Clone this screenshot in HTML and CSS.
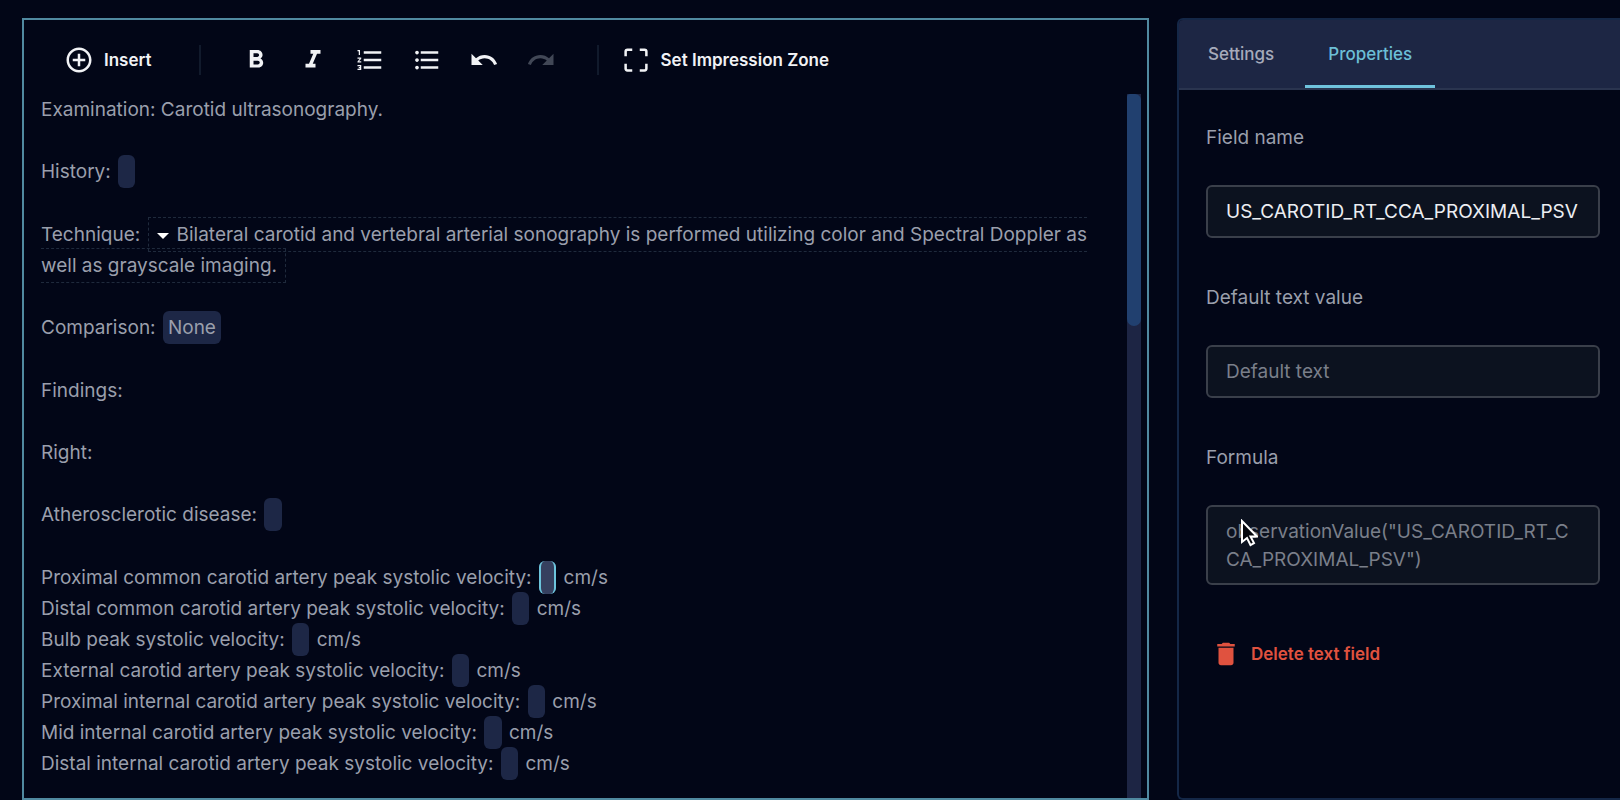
FILE: index.html
```html
<!DOCTYPE html>
<html lang="en">
<head>
<meta charset="utf-8">
<title>Template editor</title>
<link rel="stylesheet" href="styles.css">
</head>
<body>
<main class="workspace">
  <section class="editor">
    <div class="toolbar">
      <button class="tool tool-labelled" type="button">
        <svg class="icon" viewBox="0 0 24 24"><path d="M13 7h-2v4H7v2h4v4h2v-4h4v-2h-4V7zm-1-5C6.480 2 2 6.480 2 12s4.480 10 10 10 10-4.480 10-10S17.520 2 12 2zm0 18c-4.410 0-8-3.590-8-8s3.590-8 8-8 8 3.590 8 8-3.590 8-8 8z"/></svg>
        Insert
      </button>
      <span class="divider"></span>
      <div class="tool-group">
        <button class="tool" type="button" aria-label="Bold"><svg class="icon" viewBox="0 0 24 24"><path d="M15.600 10.790c.970-.670 1.650-1.770 1.650-2.790 0-2.260-1.750-4-4-4H7v14h7.040c2.090 0 3.710-1.700 3.710-3.790 0-1.520-.860-2.820-2.150-3.420zM10 6.500h3c.830 0 1.500.670 1.500 1.500s-.670 1.500-1.500 1.500h-3v-3zm3.500 9H10v-3h3.500c.830 0 1.500.670 1.500 1.500s-.670 1.500-1.500 1.500z"/></svg></button>
        <button class="tool" type="button" aria-label="Italic"><svg class="icon" viewBox="0 0 24 24"><path d="M10 4v3h2.210l-3.420 8H6v3h8v-3h-2.210l3.420-8H18V4z"/></svg></button>
        <button class="tool" type="button" aria-label="Numbered list"><svg class="icon" viewBox="0 0 24 24"><path d="M2 17h2v.5H3v1h1v.5H2v1h3v-4H2v1zm1-9h1V4H2v1h1v3zm-1 3h1.800L2 13.100v.9h3v-1H3.200L5 10.900V10H2v1zm5-6v2h14V5H7zm0 14h14v-2H7v2zm0-6h14v-2H7v2z"/></svg></button>
        <button class="tool" type="button" aria-label="Bulleted list"><svg class="icon" viewBox="0 0 24 24"><path d="M4 10.500c-.830 0-1.500.670-1.500 1.500s.670 1.500 1.500 1.500 1.500-.670 1.500-1.500-.670-1.500-1.500-1.500zm0-6c-.830 0-1.500.670-1.500 1.500S3.170 7.500 4 7.500 5.500 6.830 5.500 6 4.830 4.500 4 4.500zm0 12c-.830 0-1.500.680-1.500 1.500s.680 1.500 1.500 1.500 1.500-.680 1.500-1.500-.670-1.500-1.500-1.500zM7 19h14v-2H7v2zm0-6h14v-2H7v2zm0-8v2h14V5H7z"/></svg></button>
        <button class="tool" type="button" aria-label="Undo"><svg class="icon" viewBox="0 0 24 24"><path d="M12.500 8c-2.650 0-5.050.990-6.900 2.600L2 7v9h9l-3.620-3.620c1.390-1.160 3.160-1.880 5.120-1.880 3.540 0 6.550 2.310 7.600 5.500l2.370-.780C21.080 11.030 17.150 8 12.500 8z"/></svg></button>
        <button class="tool" type="button" aria-label="Redo" disabled><svg class="icon" viewBox="0 0 24 24"><path d="M18.400 10.600C16.550 8.990 14.150 8 11.500 8c-4.650 0-8.580 3.030-9.960 7.220L3.900 16c1.050-3.190 4.050-5.500 7.600-5.500 1.950 0 3.730.720 5.120 1.880L13 16h9V7l-3.600 3.600z"/></svg></button>
      </div>
      <span class="divider"></span>
      <button class="tool tool-labelled" type="button">
        <svg class="icon" viewBox="0 0 24 24"><path class="stroke" d="M3.700 9V5.200a1.500 1.500 0 0 1 1.500-1.500H9M15 3.700h3.800a1.500 1.500 0 0 1 1.500 1.500V9M20.300 15v3.800a1.500 1.500 0 0 1-1.500 1.500H15M9 20.300H5.200a1.500 1.500 0 0 1-1.500-1.500V15"/></svg>
        Set Impression Zone
      </button>
    </div>
    <div class="document">
      <div class="document-text">
        <p>Examination: Carotid ultrasonography.</p>
        <p>History: <span class="field empty">&nbsp;</span></p>
        <p>Technique: <span class="choice"><svg class="caret" viewBox="0 0 12 6"><path d="M0 0h12L6 6z"/></svg>Bilateral carotid and vertebral arterial sonography is performed utilizing color and Spectral Doppler as well as grayscale imaging.</span></p>
        <p>Comparison: <span class="field">None</span></p>
        <p>Findings:</p>
        <p>Right:</p>
        <p>Atherosclerotic disease: <span class="field empty">&nbsp;</span></p>
        <p>Proximal common carotid artery peak systolic velocity: <span class="field empty selected">&nbsp;</span> cm/s<br>
        Distal common carotid artery peak systolic velocity: <span class="field empty">&nbsp;</span> cm/s<br>
        Bulb peak systolic velocity: <span class="field empty">&nbsp;</span> cm/s<br>
        External carotid artery peak systolic velocity: <span class="field empty">&nbsp;</span> cm/s<br>
        Proximal internal carotid artery peak systolic velocity: <span class="field empty">&nbsp;</span> cm/s<br>
        Mid internal carotid artery peak systolic velocity: <span class="field empty">&nbsp;</span> cm/s<br>
        Distal internal carotid artery peak systolic velocity: <span class="field empty">&nbsp;</span> cm/s</p>
      </div>
      <div class="scrollbar"><div class="thumb"></div></div>
    </div>
  </section>

  <aside class="panel">
    <nav class="tabs">
      <button class="tab" type="button">Settings</button>
      <button class="tab active" type="button">Properties</button>
    </nav>
    <form class="properties">
      <label for="field-name">Field name</label>
      <input id="field-name" type="text" value="US_CAROTID_RT_CCA_PROXIMAL_PSV">
      <label for="default-text">Default text value</label>
      <input id="default-text" type="text" placeholder="Default text">
      <label for="formula">Formula</label>
      <div class="formula">
        <textarea id="formula" rows="2" placeholder="observationValue(&quot;US_CAROTID_RT_CCA_PROXIMAL_PSV&quot;)"></textarea>
        <svg class="pointer" viewBox="0 0 18 28"><path d="M2 2v21l5-4 3.500 7 3.500-2-3.500-6.500H17z"/></svg>
      </div>
      <button class="delete" type="button">
        <svg class="icon" viewBox="0 0 24 24"><path d="M6 19c0 1.100.9 2 2 2h8c1.100 0 2-.9 2-2V7H6v12zM19 4h-3.500l-1-1h-5l-1 1H5v2h14V4z"/></svg>
        Delete text field
      </button>
    </form>
  </aside>
</main>
</body>
</html>
```
FILE: styles.css
```css
* {
  box-sizing: border-box;
}

body {
  margin: 0;
  background: #020617;
  color: #9a9fac;
  font: 400 19px/31px Inter, "Liberation Sans", sans-serif;
}

button,
input,
textarea {
  font: inherit;
  color: inherit;
}

button {
  border: 0;
  background: none;
  padding: 0;
}

.workspace {
  display: grid;
  grid-template-columns: minmax(0, 1fr) 443px;
  gap: 28px;
  height: 100vh;
  padding: 18px 0 0 22px;
}

.editor {
  display: flex;
  flex-direction: column;
  border: 2px solid #5089a0;
  min-height: 0;
}

.toolbar {
  display: flex;
  align-items: center;
  padding: 25px 40px 0;
  color: #f1f2f5;
}

.icon {
  width: 30px;
  height: 30px;
  fill: currentColor;
  flex: none;
}

.icon .stroke {
  fill: none;
  stroke: currentColor;
  stroke-width: 2;
}

.tool {
  display: flex;
  align-items: center;
}

.tool:disabled {
  color: #414756;
}

.tool-labelled {
  gap: 10px;
  font-size: 17px;
  line-height: 30px;
  font-weight: 600;
}

.tool-group {
  display: flex;
  gap: 27px;
}

.divider {
  width: 2px;
  height: 30px;
  margin: 0 40px 0 47px;
  background: #111a2c;
}

.tool-group + .divider {
  margin: 0 22px 0 41px;
}

.document {
  display: flex;
  flex: 1;
  min-height: 0;
  margin-top: 19px;
  padding-right: 6px;
}

.document-text {
  flex: 1;
  padding: 0 8px 0 17px;
  overflow: hidden;
}

.document-text p {
  margin: 0 0 31px;
}

.document-text p:has(> .field) {
  padding-bottom: 1px;
}

.field {
  margin: 0 2px;
  padding: 5px;
  border-radius: 6px;
  background: #1d2746;
}

.field.empty {
  padding: 5px 6px;
}

.field.selected {
  padding: 5px 4px;
  border: solid #6cc4dc;
  border-width: 0 2px;
  background: #36405f;
}

.choice {
  margin-left: 2px;
  padding: 5px 8px;
  border: 1px dashed #1f2a3c;
}

.caret {
  width: 12px;
  height: 6px;
  margin-right: 8px;
  vertical-align: 2px;
  fill: #ffffff;
}

.scrollbar {
  width: 14px;
  background: #1d2544;
}

.thumb {
  height: 33%;
  border-radius: 3px 6px 7px 7px;
  background: #21406f;
}

.panel {
  border: 2px solid #142747;
  border-right: 0;
  border-radius: 6px 0 0 6px;
  overflow: hidden;
}

.tabs {
  display: flex;
  gap: 8px;
  height: 70px;
  padding-left: 6px;
  border-bottom: 2px solid #2a344f;
  background: #1d2644;
}

.tab {
  padding: 4px 23px 0;
  border-bottom: 3px solid transparent;
  color: #a6abbb;
  font-size: 17px;
  font-weight: 500;
}

.tab.active {
  border-color: #6fc3dd;
  color: #6cbfd6;
}

.properties {
  display: flex;
  flex-direction: column;
  padding: 32px 20px 0 27px;
}

.properties label {
  margin-bottom: 32px;
}

.properties input,
.properties textarea {
  display: block;
  width: 100%;
  border: 2px solid #3a3f4a;
  border-radius: 6px;
  background: #0c121f;
  outline: 0;
}

.properties input {
  height: 53px;
  margin-bottom: 44px;
  padding: 0 18px;
  color: #eceef2;
}

.properties textarea {
  height: 80px;
  padding: 11px 24px 9px 18px;
  line-height: 28px;
  resize: none;
  overflow: hidden;
  word-break: break-all;
}

.properties ::placeholder {
  color: #7a7f8a;
  opacity: 1;
}

.formula {
  position: relative;
}

.pointer {
  position: absolute;
  top: 14px;
  left: 34px;
  width: 18px;
  height: 28px;
  fill: #05070d;
  stroke: #ffffff;
  stroke-width: 2;
}

.delete {
  display: flex;
  align-items: center;
  align-self: flex-start;
  gap: 10px;
  margin: 54px 0 0 5px;
  color: #e0523f;
  font-size: 17px;
  line-height: 30px;
  font-weight: 600;
}
```
